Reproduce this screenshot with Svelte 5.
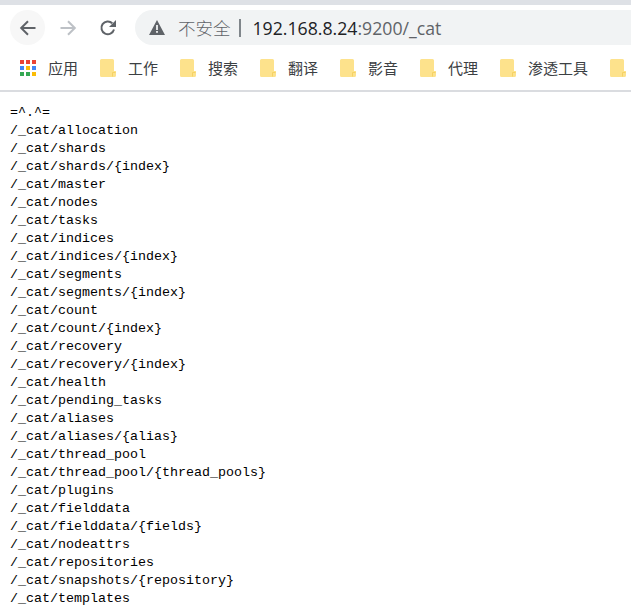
<script lang="ts">
  const bookmarks = [
    { name: "工作", width: 80 },
    { name: "搜索", width: 80 },
    { name: "翻译", width: 80 },
    { name: "影音", width: 80 },
    { name: "代理", width: 80 },
    { name: "渗透工具", width: 110 },
    { name: "", width: 30 },
  ];

  const appColors = [
    "#ea4335", "#ea4335", "#ea4335",
    "#4285f4", "#fbbc05", "#4285f4",
    "#34a853", "#34a853", "#fbbc05",
  ];

  const lines = `=^.^=
/_cat/allocation
/_cat/shards
/_cat/shards/{index}
/_cat/master
/_cat/nodes
/_cat/tasks
/_cat/indices
/_cat/indices/{index}
/_cat/segments
/_cat/segments/{index}
/_cat/count
/_cat/count/{index}
/_cat/recovery
/_cat/recovery/{index}
/_cat/health
/_cat/pending_tasks
/_cat/aliases
/_cat/aliases/{alias}
/_cat/thread_pool
/_cat/thread_pool/{thread_pools}
/_cat/plugins
/_cat/fielddata
/_cat/fielddata/{fields}
/_cat/nodeattrs
/_cat/repositories
/_cat/snapshots/{repository}
/_cat/templates`;
</script>

<div class="page">
  <div class="tabstrip"></div>

  <div class="toolbar">
    <button class="nav back" aria-label="后退">
      <svg width="18" height="18" viewBox="0 0 18 18" fill="none" stroke="#5f6368" stroke-width="2">
        <path d="M16.5 9H2.5M9 2.2 2.2 9 9 15.8" />
      </svg>
    </button>
    <button class="nav" aria-label="前进">
      <svg width="18" height="18" viewBox="0 0 18 18" fill="none" stroke="#bdc1c6" stroke-width="2">
        <path d="M1.5 9h14M9 2.2 15.8 9 9 15.8" />
      </svg>
    </button>
    <button class="nav" aria-label="刷新">
      <svg width="18" height="18" viewBox="0 0 18 18" fill="none">
        <path d="M15 10.5A6.4 6.4 0 1 1 13.3 4.2" stroke="#5f6368" stroke-width="2" />
        <path d="M17 1v7h-7z" fill="#5f6368" />
      </svg>
    </button>

    <div class="omnibox">
      <svg class="warn" width="16" height="15" viewBox="0 0 16 15">
        <path d="M8 0 16 15H0z" fill="#5f6368" />
        <rect x="7.1" y="5" width="1.8" height="5" fill="#f1f3f4" />
        <rect x="7.1" y="11" width="1.8" height="1.8" fill="#f1f3f4" />
      </svg>
      <span class="insecure">不安全</span>
      <span class="sep"></span>
      <span class="url"><span class="host">192.168.8.24</span>:9200/_cat</span>
    </div>
  </div>

  <div class="bookmarks">
    <div class="bookmark apps">
      <span class="grid">
        {#each appColors as color}
          <i style="background: {color}"></i>
        {/each}
      </span>
      <span class="label">应用</span>
    </div>
    {#each bookmarks as b}
      <div class="bookmark" style="width: {b.width}px">
        <svg width="16" height="18" viewBox="0 0 16 18">
          <path d="M1.5 0h11A1.5 1.5 0 0 1 14 1.5V12h2v4.5a1.5 1.5 0 0 1-1.5 1.5h-13A1.5 1.5 0 0 1 0 16.500V1.500A1.500 1.500 0 0 1 1.500 0z" fill="#fde28c" />
          <path d="M12.500 17.500V13.500h3" fill="none" stroke="#f5d264" stroke-width="1" />
        </svg>
        {#if b.name}<span class="label">{b.name}</span>{/if}
      </div>
    {/each}
  </div>

  <pre class="content">{lines}</pre>
</div>

<style>
  :global(body) {
    margin: 0;
    background: #fff;
  }

  .page {
    width: 631px;
    height: 616px;
    overflow: hidden;
    display: flex;
    flex-direction: column;
  }

  .tabstrip {
    height: 5px;
    background: #dee1e6;
    flex-shrink: 0;
  }

  .toolbar {
    height: 35px;
    display: flex;
    align-items: center;
    padding: 5px 0 0 10px;
    gap: 5px;
    flex-shrink: 0;
  }

  .nav {
    width: 35px;
    height: 35px;
    border: 0;
    padding: 0;
    border-radius: 50%;
    background: none;
    display: flex;
    align-items: center;
    justify-content: center;
  }

  .back {
    background: #f7f7f7;
  }

  .omnibox {
    margin-left: 5px;
    flex: 1;
    height: 35px;
    border-radius: 17.500px 0 0 17.500px;
    background: #f1f3f4;
    display: flex;
    align-items: center;
    padding-left: 14px;
    font-family: "Noto Sans CJK SC", "Liberation Sans", sans-serif;
    white-space: nowrap;
  }

  .warn {
    flex-shrink: 0;
  }

  .insecure {
    margin-left: 13px;
    font-size: 17.500px;
    font-weight: 300;
    color: #5f6368;
  }

  .sep {
    width: 2px;
    height: 18px;
    margin: 0 12px 0 8px;
    background: #80868b;
  }

  .url {
    font-family: "Open Sans", "Liberation Sans", sans-serif;
    font-size: 17.700px;
    color: #5f6368;
  }

  .host {
    color: #202124;
  }

  .bookmarks {
    height: 45px;
    display: flex;
    align-items: center;
    padding-left: 20px;
    border-bottom: 2px solid #dadce0;
    box-sizing: content-box;
    flex-shrink: 0;
    overflow: hidden;
  }

  .bookmark {
    display: flex;
    align-items: center;
    flex-shrink: 0;
    gap: 12px;
    font-family: "Noto Sans CJK SC", sans-serif;
    font-size: 15px;
    color: #3c4043;
  }

  .apps {
    width: 80px;
    gap: 12px;
  }

  .grid {
    display: grid;
    grid-template-columns: repeat(3, 4px);
    grid-auto-rows: 4px;
    gap: 2px;
  }

  .grid i {
    display: block;
  }

  .content {
    margin: 0;
    padding: 12px 0 0 10px;
    font-family: "Liberation Mono", monospace;
    font-size: 13.330px;
    line-height: 18px;
    color: #000;
  }
</style>
